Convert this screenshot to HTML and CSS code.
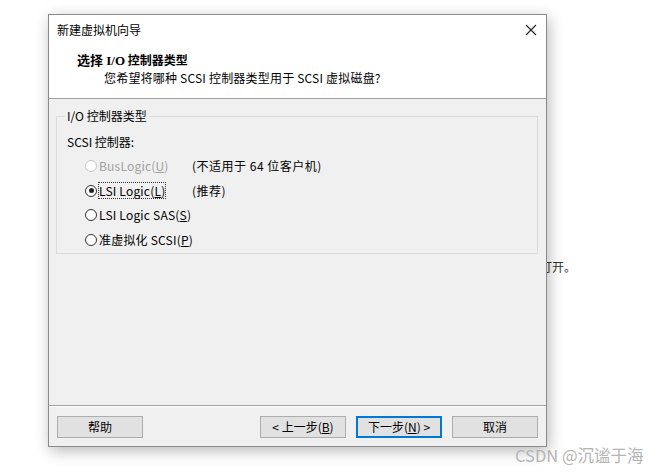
FILE: index.html
```html
<!DOCTYPE html>
<html lang="zh">
<head>
<meta charset="utf-8">
<link rel="stylesheet" href="styles.css">
</head>
<body>
<div class="bgtext">打开。</div>
<div class="dialog">
  <div class="titlebar">
    <span class="title">新建虚拟机向导</span>
    <svg class="close" width="12" height="12" viewBox="0 0 12 12"><path d="M1 1L11 11M11 1L1 11" stroke="#222" stroke-width="1.1" fill="none"/></svg>
  </div>
  <div class="header">
    <div class="h-title"><span class="serif">选择 I/O</span> 控制器类型</div>
    <div class="h-sub">您希望将哪种 SCSI 控制器类型用于 SCSI 虚拟磁盘?</div>
  </div>
  <div class="body">
    <fieldset class="group">
      <legend>I/O 控制器类型</legend>
      <div class="label">SCSI 控制器:</div>
      <div class="opts">
        <div class="opt disabled"><span class="radio"></span><span>BusLogic(<u>U</u>)</span></div>
        <div class="note">(不适用于 64 位客户机)</div>
        <div class="opt"><span class="radio on"></span><span class="focus">LSI Logic(<u>L</u>)</span></div>
        <div class="note">(推荐)</div>
        <div class="opt wide"><span class="radio"></span><span>LSI Logic SAS(<u>S</u>)</span></div>
        <div class="opt wide"><span class="radio"></span><span>准虚拟化 SCSI(<u>P</u>)</span></div>
      </div>
    </fieldset>
  </div>
  <div class="footer">
    <button class="btn">帮助</button>
    <div class="spacer"></div>
    <button class="btn">&lt; 上一步(<u>B</u>)</button>
    <button class="btn primary">下一步(<u>N</u>) &gt;</button>
    <button class="btn">取消</button>
  </div>
</div>
<div class="watermark">CSDN @沉谧于海</div>
</body>
</html>
```

FILE: styles.css
```css
html, body {
  margin: 0;
  padding: 0;
  background: #ffffff;
  width: 666px;
  height: 473px;
  overflow: hidden;
  font-family: "Noto Sans CJK SC", "Noto Sans", sans-serif;
  font-size: 12px;
  color: #000;
}
.bgtext {
  position: absolute;
  left: 540px;
  top: 258px;
  font-size: 12px;
  color: #333;
}
.dialog {
  position: absolute;
  left: 48px;
  top: 14px;
  width: 497px;
  height: 431px;
  border: 1px solid #8a8a8a;
  background: #f0f0f0;
  display: flex;
  flex-direction: column;
  box-shadow: 2px 4px 14px rgba(0,0,0,0.28);
}
.titlebar {
  height: 30px;
  background: #fff;
  display: flex;
  align-items: center;
  justify-content: space-between;
  padding: 0 9px 0 8px;
}
.title {
  font-size: 12px;
  line-height: 16px;
  margin-top: 0;
}
.header {
  height: 54px;
  background: #fff;
  border-bottom: 1px solid #a0a0a0;
  padding-left: 28px;
  box-sizing: border-box;
  padding-top: 7px;
}
.h-title {
  font-weight: bold;
  font-size: 12px;
  line-height: 16px;
}
.serif {
  font-family: "Liberation Serif", "Noto Sans CJK SC", serif;
  font-size: 13px;
}
.h-sub {
  padding-left: 27px;
  line-height: 16px;
  margin-top: 1px;
  letter-spacing: 0.2px;
}
.body {
  flex: 1;
  padding: 9px 8px 0 7px;
  border-bottom: 1px solid #a0a0a0;
  box-shadow: 0 1px 0 #fff;
}
.group {
  margin: 0;
  padding: 0 0 4px 10px;
  border: 1px solid #dcdcdc;
  height: 146px;
  box-sizing: border-box;
}
.group legend {
  padding: 0 2px;
  margin-left: -2px;
  font-size: 12px;
  line-height: 16px;
  color: #000;
}
.label {
  line-height: 16px;
  margin-top: 10px;
  height: 18px;
}
.opts {
  display: grid;
  grid-template-columns: 102px auto;
  grid-auto-rows: 24.6px;
  margin-top: 2px;
  padding-left: 17px;
}
.opt {
  display: flex;
  align-items: center;
  gap: 2px;
  line-height: 16px;
  letter-spacing: 0.2px;
}
.opt.wide {
  grid-column: 1 / 3;
}
.opt.disabled {
  color: #a0a0a0;
}
.note {
  display: flex;
  align-items: center;
  line-height: 16px;
  margin-left: 6px;
  letter-spacing: 0.5px;
}
.radio {
  width: 12px;
  height: 12px;
  border: 1px solid #333;
  border-radius: 50%;
  background: #fff;
  box-sizing: border-box;
  position: relative;
  flex: none;
  margin-left: 1px;
}
.disabled .radio {
  border-color: #c6c6c6;
}
.radio.on::after {
  content: "";
  position: absolute;
  left: 2.5px;
  top: 2.5px;
  width: 5px;
  height: 5px;
  border-radius: 50%;
  background: #222;
}
.focus {
  outline: 1px dotted #333;
  outline-offset: 0;
  line-height: 15px;
}
u {
  text-decoration: underline;
  text-underline-offset: 1px;
}
.footer {
  height: 40px;
  display: flex;
  align-items: center;
  padding: 0 8px;
  gap: 10px;
  padding-top: 2px;
  box-sizing: border-box;
}
.spacer {
  flex: 1;
}
.btn {
  width: 86px;
  height: 22px;
  border: 1px solid #adadad;
  background: #e1e1e1;
  font-family: "Noto Sans CJK SC", "Noto Sans", sans-serif;
  font-size: 12px;
  color: #000;
  padding: 0;
  line-height: 16px;
}
.btn.primary {
  border: 1px solid #0078d7;
  box-shadow: inset 0 0 0 1px #0078d7;
}
.watermark {
  position: absolute;
  left: 515px;
  top: 443px;
  font-size: 16.5px;
  color: #b4b4b4;
  font-family: "Noto Sans CJK SC", "Liberation Sans", sans-serif;
}
```
